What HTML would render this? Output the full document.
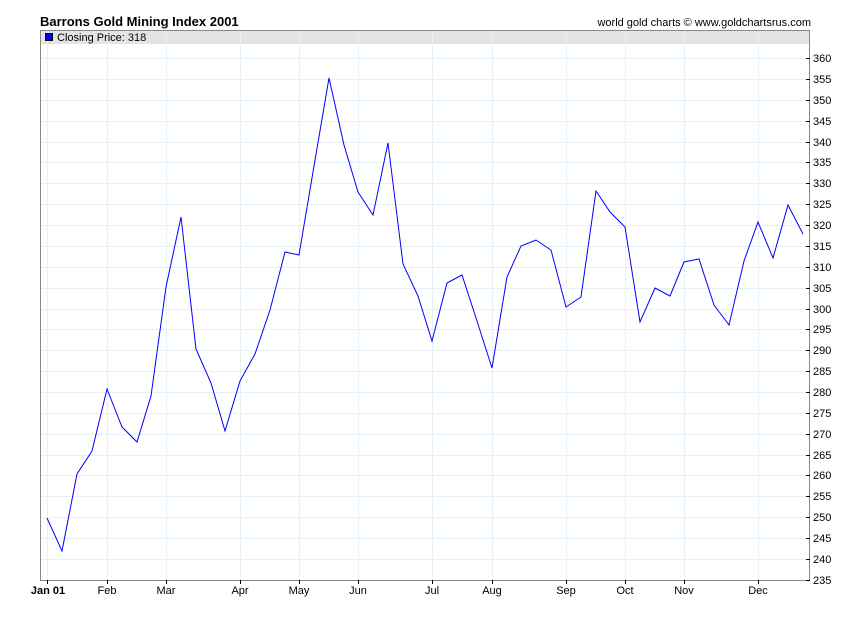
<!DOCTYPE html><html><head><style>body{margin:0;background:#fff;width:850px;height:616px;overflow:hidden}</style></head><body>
<svg width="850" height="616" xmlns="http://www.w3.org/2000/svg" font-family="Liberation Sans, sans-serif">
<rect width="850" height="616" fill="#fff"/>
<text x="40" y="26" font-size="13" font-weight="bold" fill="#000">Barrons Gold Mining Index 2001</text>
<text x="811" y="26" font-size="11" fill="#000" text-anchor="end">world gold charts © www.goldchartsrus.com</text>
<rect x="40" y="30" width="770" height="14" fill="#e4e4e4"/>
<g stroke="#e6f0f8" stroke-width="1">
<line x1="40" x2="810" y1="58.5" y2="58.5"/><line x1="40" x2="810" y1="79.5" y2="79.5"/><line x1="40" x2="810" y1="100.5" y2="100.5"/><line x1="40" x2="810" y1="121.5" y2="121.5"/><line x1="40" x2="810" y1="142.5" y2="142.5"/><line x1="40" x2="810" y1="162.5" y2="162.5"/><line x1="40" x2="810" y1="183.5" y2="183.5"/><line x1="40" x2="810" y1="204.5" y2="204.5"/><line x1="40" x2="810" y1="225.5" y2="225.5"/><line x1="40" x2="810" y1="246.5" y2="246.5"/><line x1="40" x2="810" y1="267.5" y2="267.5"/><line x1="40" x2="810" y1="288.5" y2="288.5"/><line x1="40" x2="810" y1="309.5" y2="309.5"/><line x1="40" x2="810" y1="329.5" y2="329.5"/><line x1="40" x2="810" y1="350.5" y2="350.5"/><line x1="40" x2="810" y1="371.5" y2="371.5"/><line x1="40" x2="810" y1="392.5" y2="392.5"/><line x1="40" x2="810" y1="413.5" y2="413.5"/><line x1="40" x2="810" y1="434.5" y2="434.5"/><line x1="40" x2="810" y1="455.5" y2="455.5"/><line x1="40" x2="810" y1="475.5" y2="475.5"/><line x1="40" x2="810" y1="496.5" y2="496.5"/><line x1="40" x2="810" y1="517.5" y2="517.5"/><line x1="40" x2="810" y1="538.5" y2="538.5"/><line x1="40" x2="810" y1="559.5" y2="559.5"/>
<line y1="30" y2="580" x1="47.5" x2="47.5"/><line y1="30" y2="580" x1="107.5" x2="107.5"/><line y1="30" y2="580" x1="166.5" x2="166.5"/><line y1="30" y2="580" x1="240.5" x2="240.5"/><line y1="30" y2="580" x1="299.5" x2="299.5"/><line y1="30" y2="580" x1="358.5" x2="358.5"/><line y1="30" y2="580" x1="432.5" x2="432.5"/><line y1="30" y2="580" x1="492.5" x2="492.5"/><line y1="30" y2="580" x1="566.5" x2="566.5"/><line y1="30" y2="580" x1="625.5" x2="625.5"/><line y1="30" y2="580" x1="684.5" x2="684.5"/><line y1="30" y2="580" x1="758.5" x2="758.5"/>
</g>
<rect x="40.5" y="30.5" width="769" height="550" fill="none" stroke="#888"/>
<rect x="45.5" y="33.5" width="7" height="7" fill="#00f" stroke="#000"/>
<text x="57" y="41" font-size="11" fill="#000">Closing Price: 318</text>
<polyline fill="none" stroke="#00f" stroke-width="1" points="47,518 62,551 77,474 92,451 107,389 122,427 137,442 151,396 166,287 181,217 196,349 211,383 225,431 240,381 255,354 270,310 285,252 299,255 314,166 329,78 344,145 358,192 373,215 388,143 403,264 418,296 432,341 447,283 462,275 477,321 492,368 507,277 521,246 536,240 551,250 566,307 581,297 596,191 610,212 625,227 640,322 655,288 670,296 684,262 699,259 714,305 729,325 744,261 758,222 773,258 788,205 803,234"/>
<g stroke="#000"><line x1="806" x2="810" y1="58.5" y2="58.5"/><line x1="806" x2="810" y1="79.5" y2="79.5"/><line x1="806" x2="810" y1="100.5" y2="100.5"/><line x1="806" x2="810" y1="121.5" y2="121.5"/><line x1="806" x2="810" y1="142.5" y2="142.5"/><line x1="806" x2="810" y1="162.5" y2="162.5"/><line x1="806" x2="810" y1="183.5" y2="183.5"/><line x1="806" x2="810" y1="204.5" y2="204.5"/><line x1="806" x2="810" y1="225.5" y2="225.5"/><line x1="806" x2="810" y1="246.5" y2="246.5"/><line x1="806" x2="810" y1="267.5" y2="267.5"/><line x1="806" x2="810" y1="288.5" y2="288.5"/><line x1="806" x2="810" y1="309.5" y2="309.5"/><line x1="806" x2="810" y1="329.5" y2="329.5"/><line x1="806" x2="810" y1="350.5" y2="350.5"/><line x1="806" x2="810" y1="371.5" y2="371.5"/><line x1="806" x2="810" y1="392.5" y2="392.5"/><line x1="806" x2="810" y1="413.5" y2="413.5"/><line x1="806" x2="810" y1="434.5" y2="434.5"/><line x1="806" x2="810" y1="455.5" y2="455.5"/><line x1="806" x2="810" y1="475.5" y2="475.5"/><line x1="806" x2="810" y1="496.5" y2="496.5"/><line x1="806" x2="810" y1="517.5" y2="517.5"/><line x1="806" x2="810" y1="538.5" y2="538.5"/><line x1="806" x2="810" y1="559.5" y2="559.5"/><line x1="806" x2="810" y1="580.5" y2="580.5"/>
<line y1="580" y2="584" x1="47.5" x2="47.5"/><line y1="580" y2="584" x1="107.5" x2="107.5"/><line y1="580" y2="584" x1="166.5" x2="166.5"/><line y1="580" y2="584" x1="240.5" x2="240.5"/><line y1="580" y2="584" x1="299.5" x2="299.5"/><line y1="580" y2="584" x1="358.5" x2="358.5"/><line y1="580" y2="584" x1="432.5" x2="432.5"/><line y1="580" y2="584" x1="492.5" x2="492.5"/><line y1="580" y2="584" x1="566.5" x2="566.5"/><line y1="580" y2="584" x1="625.5" x2="625.5"/><line y1="580" y2="584" x1="684.5" x2="684.5"/><line y1="580" y2="584" x1="758.5" x2="758.5"/></g>
<g font-size="11" fill="#000">
<text x="813" y="62">360</text><text x="813" y="83">355</text><text x="813" y="104">350</text><text x="813" y="125">345</text><text x="813" y="146">340</text><text x="813" y="166">335</text><text x="813" y="187">330</text><text x="813" y="208">325</text><text x="813" y="229">320</text><text x="813" y="250">315</text><text x="813" y="271">310</text><text x="813" y="292">305</text><text x="813" y="313">300</text><text x="813" y="333">295</text><text x="813" y="354">290</text><text x="813" y="375">285</text><text x="813" y="396">280</text><text x="813" y="417">275</text><text x="813" y="438">270</text><text x="813" y="459">265</text><text x="813" y="479">260</text><text x="813" y="500">255</text><text x="813" y="521">250</text><text x="813" y="542">245</text><text x="813" y="563">240</text><text x="813" y="584">235</text>
</g>
<g font-size="11" fill="#000" text-anchor="middle">
<text x="48" y="594" font-weight="bold">Jan 01</text><text x="107" y="594">Feb</text><text x="166" y="594">Mar</text><text x="240" y="594">Apr</text><text x="299" y="594">May</text><text x="358" y="594">Jun</text><text x="432" y="594">Jul</text><text x="492" y="594">Aug</text><text x="566" y="594">Sep</text><text x="625" y="594">Oct</text><text x="684" y="594">Nov</text><text x="758" y="594">Dec</text>
</g>
</svg>
</body></html>
